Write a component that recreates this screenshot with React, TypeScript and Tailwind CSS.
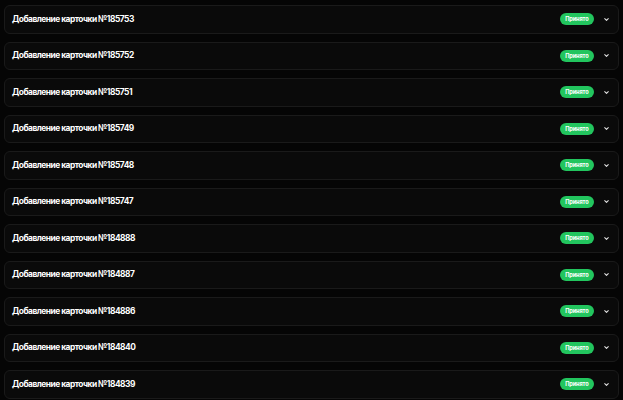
const ids = ["185753", "185752", "185751", "185749", "185748", "185747", "184888", "184887", "184886", "184840", "184839"];

function Chevron() {
  return (
    <svg width="7" height="7" viewBox="0 0 24 24" fill="none" stroke="#e5e5e5" strokeWidth="3.5" strokeLinecap="round" strokeLinejoin="round">
      <path d="M6 9l6 6 6-6" />
    </svg>
  );
}

export default function App() {
  return (
    <main className="min-h-[400px] bg-[#050505] px-1 pt-[5px] flex flex-col gap-2" style={{ fontFamily: "Inter, 'Noto Sans', sans-serif" }}>
      {ids.map((id) => (
        <div key={id} className="h-[28.5px] shrink-0 flex items-center justify-between rounded-md border border-[#1a1a1a] bg-[#0a0a0a] pl-[7px] pr-[8px]">
          <span className="text-[8.4px] font-bold text-white tracking-[-0.5px]">Добавление карточки №{id}</span>
          <div className="flex items-center gap-[9px]">
            <span className="rounded-full bg-[#22c55e] px-[5.5px] h-[12px] flex items-center text-[5.6px] font-bold text-white tracking-[-0.1px]">Принято</span>
            <Chevron />
          </div>
        </div>
      ))}
    </main>
  );
}
